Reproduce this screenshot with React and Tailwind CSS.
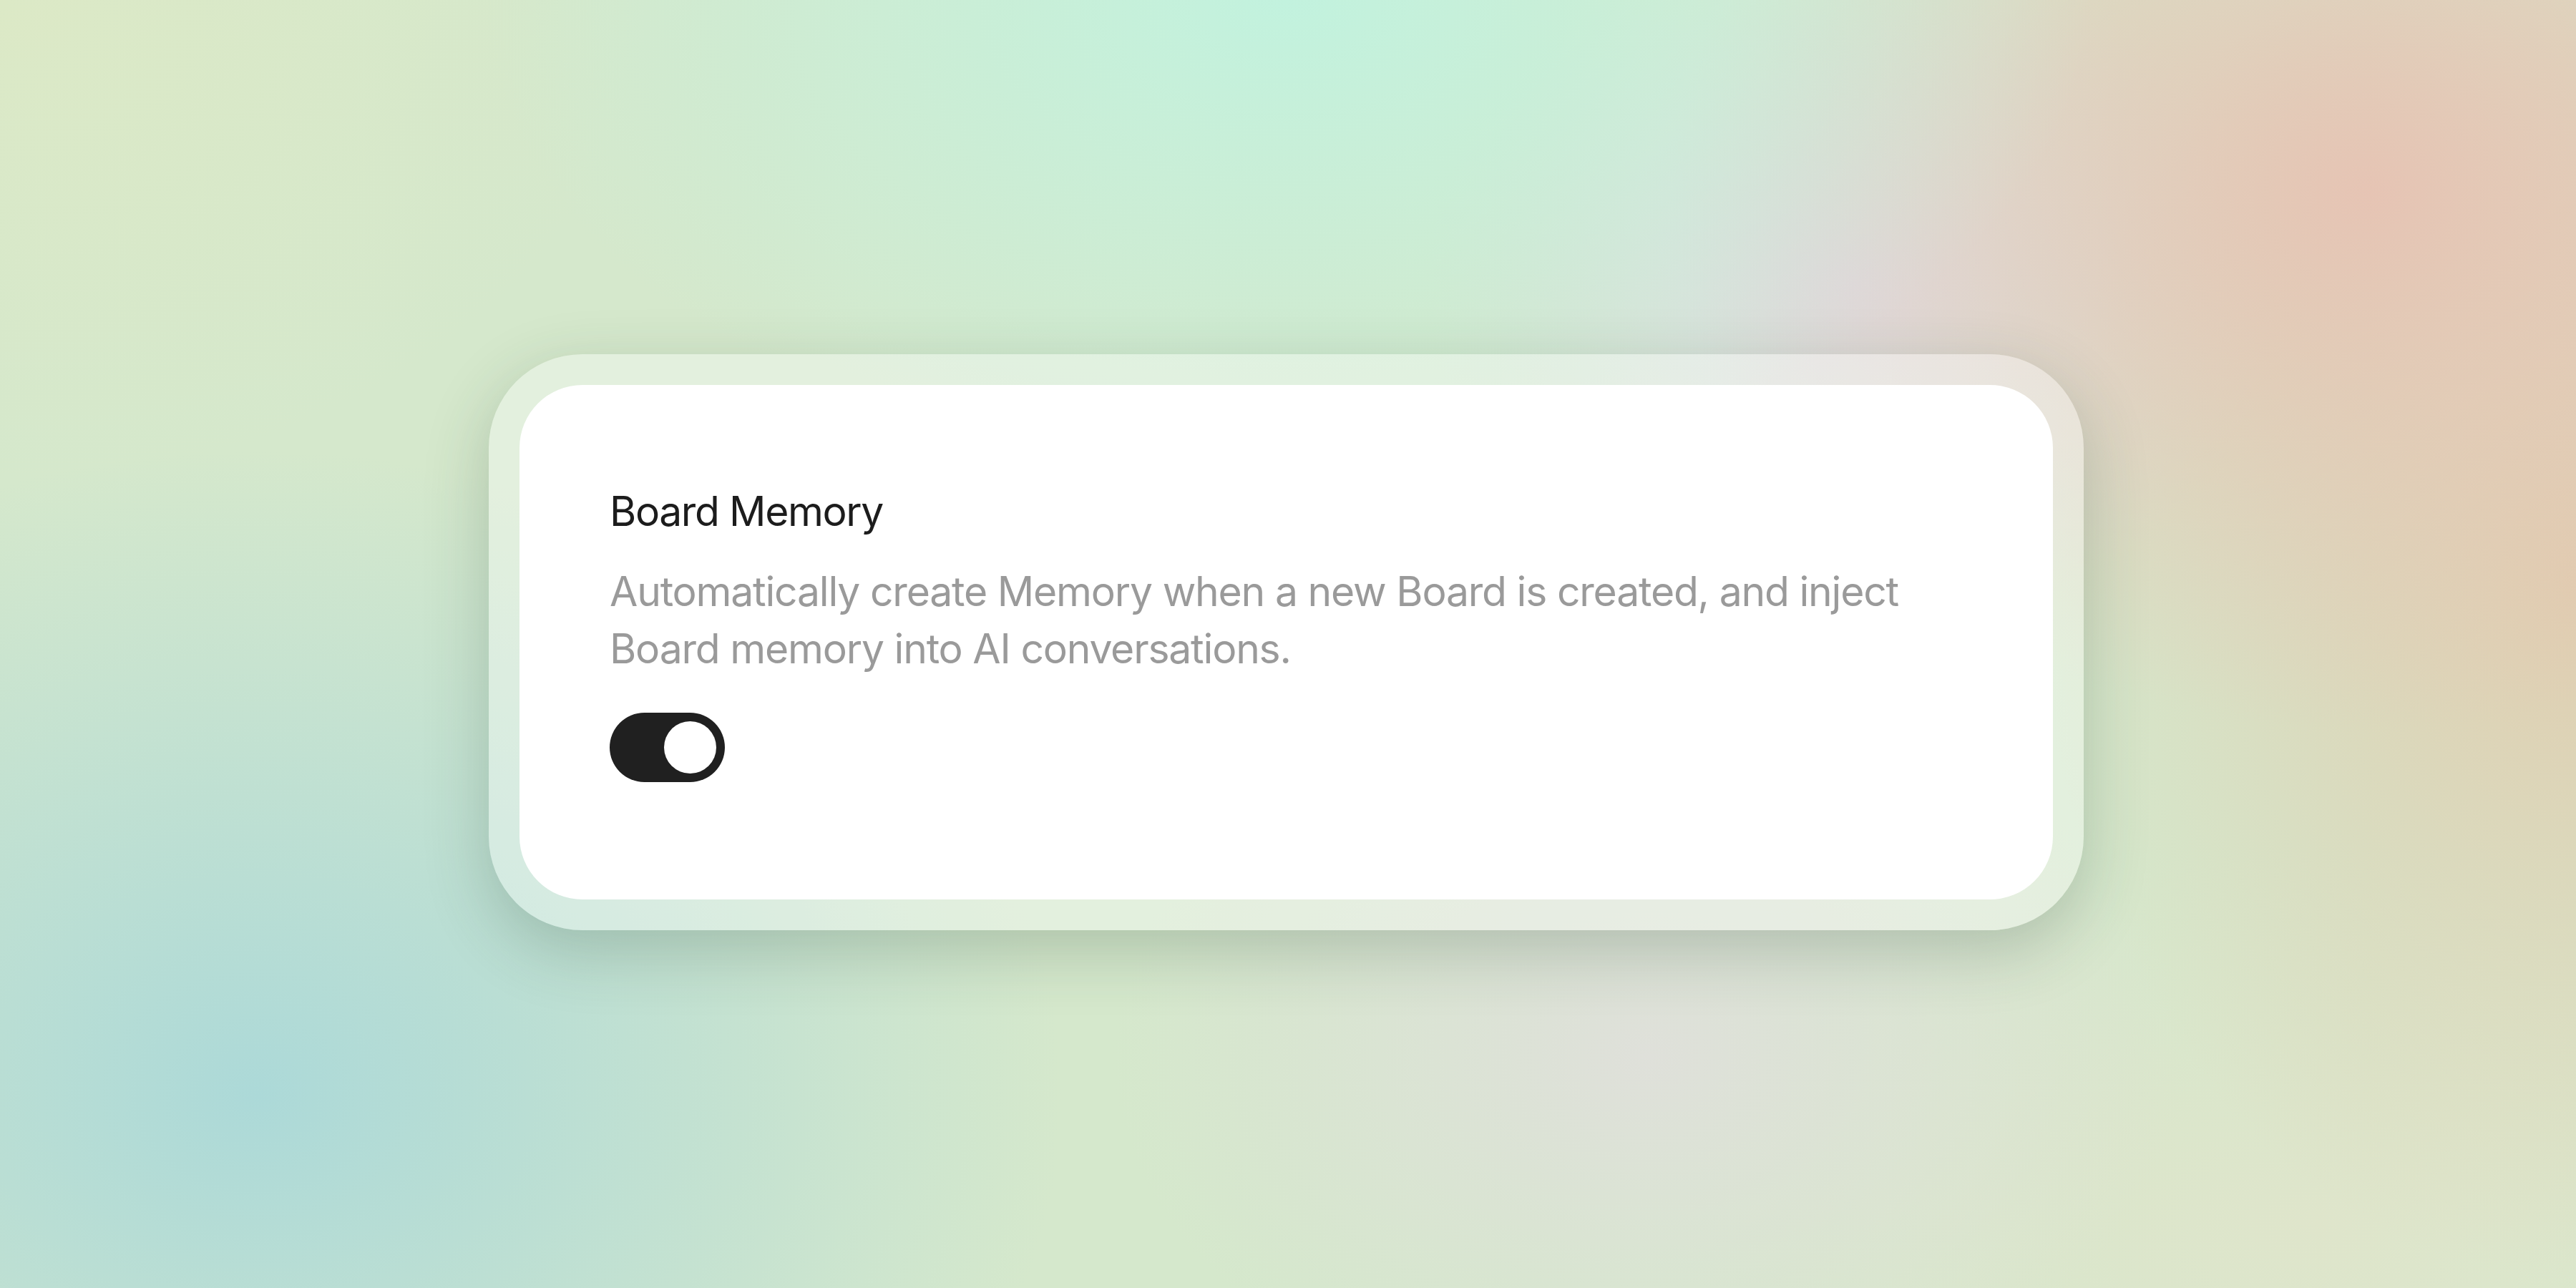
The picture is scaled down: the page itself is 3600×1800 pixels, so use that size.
export default function App() {
  return (
    <div className="min-h-screen w-full flex items-center justify-center pb-[6px] pr-[5px] bg-[#d5e8cc] bg-[image:radial-gradient(1500px_900px_at_50%_0%,#c2f2de,transparent_75%),radial-gradient(1300px_1000px_at_92%_15%,#e6c4b4,transparent_75%),radial-gradient(1000px_1300px_at_100%_45%,#e0cdb0,transparent_75%),radial-gradient(1500px_1200px_at_10%_85%,#acd9d8,transparent_75%),radial-gradient(800px_650px_at_72%_22%,#dedce3,transparent_75%),radial-gradient(1200px_900px_at_0%_0%,#dce9c6,transparent_75%),radial-gradient(1000px_700px_at_64%_82%,#dfe0da,transparent_75%),radial-gradient(1200px_700px_at_90%_95%,#dfe5cb,transparent_75%)]">
      {/* frame */}
      <div className="w-[2229px] rounded-[131px] bg-white/35 p-[43px] shadow-[0_28px_90px_rgba(40,70,55,0.24)]">
        <div className="rounded-[88px] bg-white pl-[126px] pr-[126px] pt-[137px] pb-[164px] font-['Inter',sans-serif]">
          <h2 className="text-[57px] leading-[80px] font-normal text-[#1c1c1c] tracking-[-1.4px]">Board Memory</h2>
          <p className="mt-[32px] text-[57px] leading-[80px] text-[#9a9a9a] tracking-[-1.2px]">
            Automatically create Memory when a new Board is created, and inject Board memory into AI conversations.
          </p>
          <button className="mt-[49px] flex h-[97px] w-[161px] items-center justify-end rounded-full bg-[#202020] pr-[12px]">
            <span className="block h-[73px] w-[73px] rounded-full bg-white" />
          </button>
        </div>
      </div>
    </div>
  );
}
